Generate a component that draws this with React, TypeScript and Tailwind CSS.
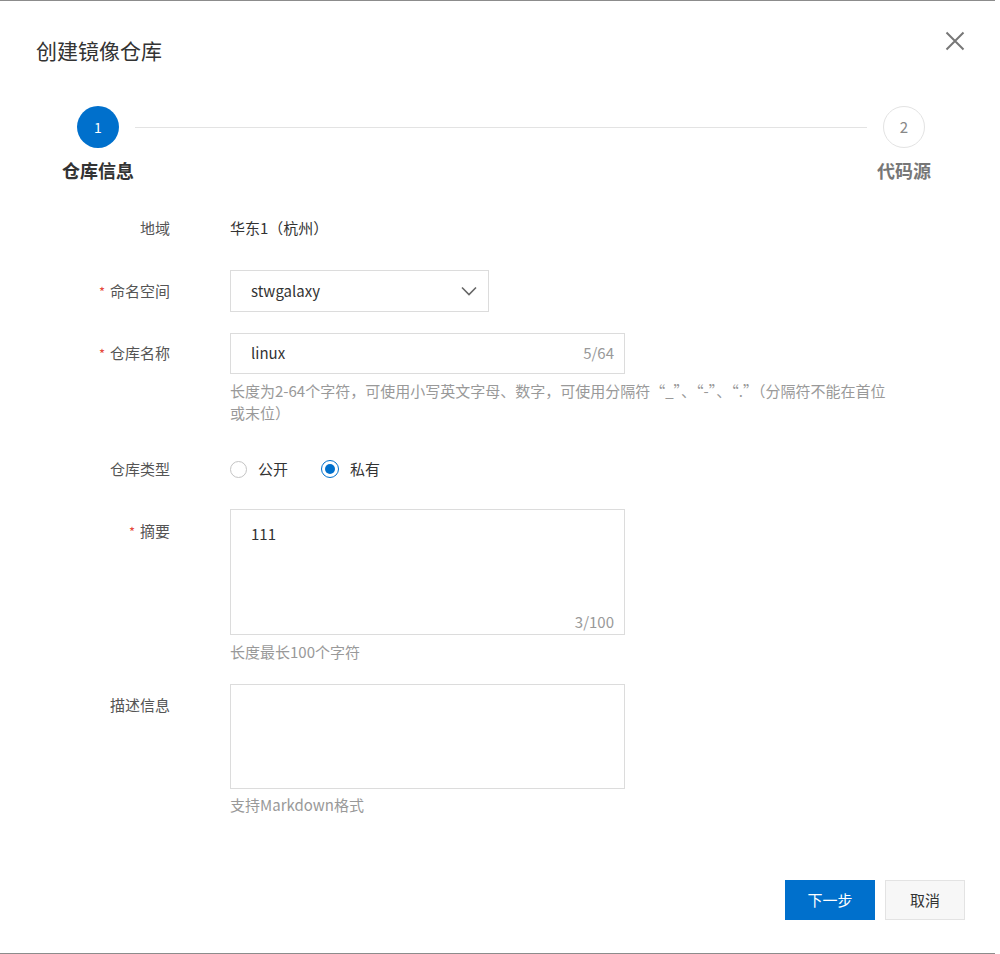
import React from "react";

const Req = () => <span className="mr-[5px] text-[13px] text-[#e5473a]">*</span>;

function Label({ children, required, className = "" }: { children: React.ReactNode; required?: boolean; className?: string }) {
  return (
    <div className={`w-[170px] shrink-0 text-right text-[15px] leading-[22px] text-[#555] ${className}`}>
      {required && <Req />}
      {children}
    </div>
  );
}

function Radio({ checked, label }: { checked?: boolean; label: string }) {
  return (
    <label className="flex items-center">
      {checked ? (
        <span className="flex h-[18px] w-[18px] items-center justify-center rounded-full border border-[#0070cc]">
          <span className="h-[10px] w-[10px] rounded-full bg-[#0070cc]" />
        </span>
      ) : (
        <span className="h-[17px] w-[17px] rounded-full border border-[#c4c4c4]" />
      )}
      <span className="ml-[11px] text-[15px] leading-[22px] text-[#333]">{label}</span>
    </label>
  );
}

export default function App() {
  return (
    <div className="h-[954px] w-[995px] border-y border-[#8c8c8c] bg-white font-['Noto_Sans_CJK_SC','Noto_Sans',sans-serif] text-[#333]">
      {/* header */}
      <div className="flex items-start justify-between pl-[36px] pr-[30px] pt-[35px]">
        <h1 className="text-[21px] font-normal leading-[28px] text-[#333]">创建镜像仓库</h1>
        <button className="mt-[-5px] text-[#777]">
          <svg width="20" height="20" viewBox="0 0 20 20" fill="none" stroke="currentColor" strokeWidth="2">
            <path d="M1.5 1.5 L18.5 18.5 M18.5 1.5 L1.5 18.5" />
          </svg>
        </button>
      </div>

      {/* steps */}
      <div className="mt-[42px] flex items-start pl-[62px] pr-[64px]">
        <div className="flex w-[72px] flex-col items-center">
          <div className="flex h-[42px] w-[42px] items-center justify-center rounded-full bg-[#0070cc] text-[14px] text-white">1</div>
          <div className="mt-[10px] text-[18px] font-bold leading-[24px] text-[#333]">仓库信息</div>
        </div>
        <div className="ml-px mr-[10px] mt-[21px] h-px flex-1 bg-[#e3e3e3]" />
        <div className="flex w-[54px] flex-col items-center">
          <div className="flex h-[42px] w-[42px] items-center justify-center rounded-full border border-[#e3e3e3] text-[15px] text-[#888]">2</div>
          <div className="mt-[10px] text-[18px] font-bold leading-[24px] text-[#777]">代码源</div>
        </div>
      </div>

      {/* form */}
      <div className="mt-[35px] flex flex-col">
        <div className="flex">
          <Label>地域</Label>
          <div className="ml-[60px] text-[15px] leading-[22px] text-[#333]">华东1（杭州）</div>
        </div>

        <div className="mt-[31px] flex items-center">
          <Label required>命名空间</Label>
          <div className="ml-[60px] flex h-[42px] w-[259px] items-center justify-between border border-[#dcdcdc] pl-[20px] pr-[10px]">
            <span className="text-[15px] text-[#333]">stwgalaxy</span>
            <svg width="18" height="18" viewBox="0 0 18 18" fill="none" stroke="#666" strokeWidth="1.6">
              <path d="M2 5.5 L9 12.5 L16 5.5" />
            </svg>
          </div>
        </div>

        <div className="mt-[21px] flex items-center">
          <Label required>仓库名称</Label>
          <div className="ml-[60px] flex h-[41px] w-[395px] items-center justify-between border border-[#dcdcdc] pl-[20px] pr-[10px]">
            <span className="text-[15px] text-[#333]">linux</span>
            <span className="text-[15px] text-[#999]">5/64</span>
          </div>
        </div>
        <div className="ml-[230px] mt-[6px] w-[700px] text-[15px] leading-[22px] text-[#999]">
          长度为2-64个字符，可使用小写英文字母、数字，可使用分隔符“_”、“-”、“.”（分隔符不能在首位
          <br />
          或末位）
        </div>

        <div className="mt-[34px] flex items-center">
          <Label>仓库类型</Label>
          <div className="ml-[60px] flex items-center gap-[33px]">
            <Radio label="公开" />
            <Radio checked label="私有" />
          </div>
        </div>

        <div className="mt-[29px] flex items-start">
          <Label required className="pt-[11px]">摘要</Label>
          <div className="ml-[60px] flex h-[126px] w-[395px] flex-col justify-between border border-[#dcdcdc] pb-[1px] pl-[20px] pr-[10px] pt-[13px]">
            <span className="text-[15px] leading-[22px] text-[#333]">111</span>
            <span className="self-end text-[15px] leading-[22px] text-[#999]">3/100</span>
          </div>
        </div>
        <div className="ml-[230px] mt-[6px] text-[15px] leading-[22px] text-[#999]">长度最长100个字符</div>

        <div className="mt-[21px] flex items-start">
          <Label className="pt-[10px]">描述信息</Label>
          <div className="ml-[60px] h-[105px] w-[395px] border border-[#dcdcdc]" />
        </div>
        <div className="ml-[230px] mt-[5px] text-[15px] leading-[22px] text-[#999]">支持Markdown格式</div>

        <div className="mt-[64px] flex justify-end gap-[10px] pr-[30px]">
          <button className="h-[40px] w-[90px] bg-[#0070cc] text-[15px] text-white">下一步</button>
          <button className="h-[40px] w-[80px] border border-[#e3e3e3] bg-[#f7f7f7] text-[15px] text-[#333]">取消</button>
        </div>
      </div>
    </div>
  );
}
